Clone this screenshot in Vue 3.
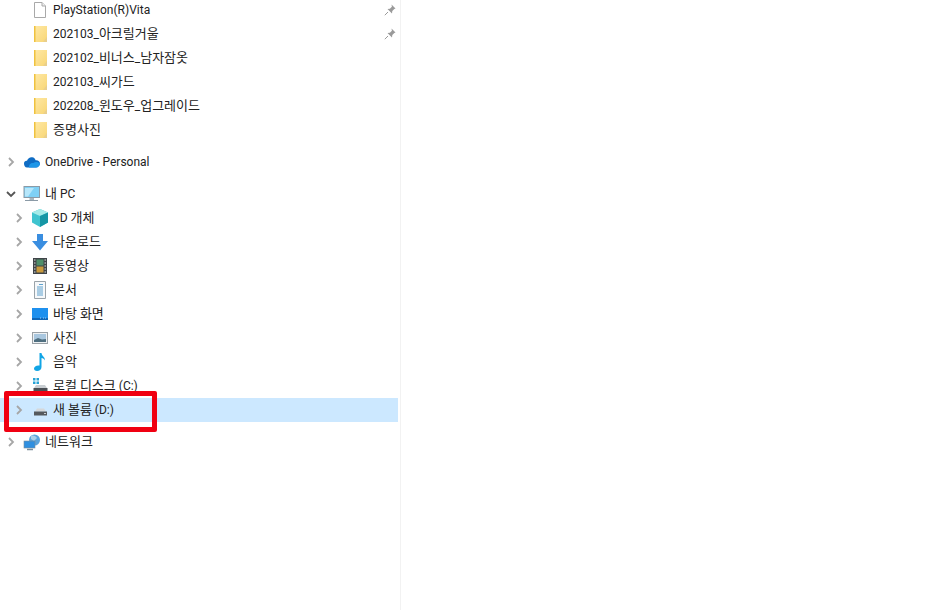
<script setup>
const quick = [
  { name: 'PlayStation(R)Vita', icon: 'file', pin: true },
  { name: '202103_아크릴거울', icon: 'folder', pin: true },
  { name: '202102_비너스_남자잠옷', icon: 'folder' },
  { name: '202103_씨가드', icon: 'folder' },
  { name: '202208_윈도우_업그레이드', icon: 'folder' },
  { name: '증명사진', icon: 'folder' },
]
const pc = [
  { name: '3D 개체', icon: 'cube' },
  { name: '다운로드', icon: 'download' },
  { name: '동영상', icon: 'film' },
  { name: '문서', icon: 'doc' },
  { name: '바탕 화면', icon: 'desktop' },
  { name: '사진', icon: 'photo' },
  { name: '음악', icon: 'music' },
  { name: '로컬 디스크 (C:)', icon: 'diskc' },
  { name: '새 볼륨 (D:)', icon: 'diskd', selected: true },
]

// hangul runs are set a bit larger, Malgun Gothic is wider than the CJK fallback
function runs(name) {
  return name.split(/([가-힣]+)/).filter(Boolean).map(text => ({ text, ko: /[가-힣]/.test(text) }))
}
</script>

<template>
  <div class="pane">
    <nav class="tree">
      <ul class="group">
        <li v-for="item in quick" :key="item.name" class="row sub">
          <span class="arrow"></span>
          <svg class="icon" viewBox="0 0 16 18" width="16" height="18">
            <defs>
              <linearGradient id="fold" x1="0" y1="0" x2="1" y2="1">
                <stop offset="0" stop-color="#ffe9a6" />
                <stop offset="1" stop-color="#f8d675" />
              </linearGradient>
            </defs>
            <template v-if="item.icon === 'file'">
              <path d="M2.500 1.500h7.500l3.500 3.500v11.500h-11z" fill="#fff" stroke="#a9a9a9" />
              <path d="M10 1.500v3.500h3.500" fill="#efefef" stroke="#a9a9a9" />
            </template>
            <template v-else>
              <rect x="2" y="1" width="13" height="16" fill="url(#fold)" />
              <rect x="2" y="1" width="1.500" height="16" fill="#efc23f" />
              <path d="M11 17l4-5v5z" fill="#e9cf8c" />
            </template>
          </svg>
          <span class="label"><span v-for="(r, i) in runs(item.name)" :key="i" :class="{ ko: r.ko }">{{ r.text }}</span></span>
          <svg v-if="item.pin" class="pin" viewBox="0 0 12 12" width="12" height="12">
            <path d="M7.500 .5l4 4-1.200.6-2 2-.3 2.400-4.500-4.500 2.400-.3 2-2z" fill="#9a9a9a" />
            <path d="M4 8l-3.200 3.200" stroke="#9a9a9a" fill="none" />
          </svg>
        </li>
      </ul>

      <ul class="group">
        <li class="row top">
          <svg class="arrow-svg" viewBox="0 0 8 10" width="8" height="10">
            <path d="M2 1l4 4-4 4" fill="none" stroke="#a6a6a6" stroke-width="1.800" />
          </svg>
          <svg class="icon" viewBox="0 0 18 12" width="18" height="12">
            <path d="M1 7.500C1 5.500 2.500 4.500 4 4.800C5 2 7 .8 9.200 1.200C11 1.500 12.200 2.600 12.600 4.200C15 3.800 17 5.400 17 7.600C17 10 15 11.500 13 11.500H4C2 11.500 1 9.500 1 7.500Z" fill="#0f6cc4" />
            <path d="M6 11.500C5.500 8.500 8 6.500 10.500 7C12 5.500 15.500 5.500 17 7.600C17 10 15 11.500 13 11.500Z" fill="#1d96e8" />
          </svg>
          <span class="label">OneDrive - Personal</span>
        </li>
      </ul>

      <ul class="group">
        <li class="row top">
          <svg class="arrow-svg" viewBox="0 0 10 8" width="10" height="8">
            <path d="M1 2l4 4 4-4" fill="none" stroke="#555" stroke-width="1.800" />
          </svg>
          <svg class="icon" viewBox="0 0 18 16" width="18" height="16">
            <rect x="1" y=".5" width="15.500" height="11" fill="#7fd0f5" stroke="#8b9aa6" />
            <path d="M2 2h9l-6 8.500H2z" fill="#b7e7fb" />
            <path d="M6.500 12h4.500v2H6.500z" fill="#a9b6bf" />
            <path d="M2 14.500h13" stroke="#8b9aa6" />
          </svg>
          <span class="label"><span class="ko">내</span> PC</span>
        </li>
        <li v-for="item in pc" :key="item.name" class="row sub" :class="{ selected: item.selected }">
          <svg class="arrow-svg" viewBox="0 0 8 10" width="8" height="10">
            <path d="M2 1l4 4-4 4" fill="none" stroke="#a6a6a6" stroke-width="1.800" />
          </svg>
          <svg class="icon" viewBox="0 0 16 18" width="16" height="18">
            <template v-if="item.icon === 'cube'">
              <path d="M8 0l8 3.500v10L8 18 0 13.500v-10z" fill="#3fc4cf" />
              <path d="M8 0l8 3.500L8 7 0 3.500z" fill="#a5ebe8" />
              <path d="M8 7l8-3.500v10L8 18z" fill="#1596a5" />
            </template>
            <path v-else-if="item.icon === 'download'" d="M5 1h6v7h5l-8 9.500-8-9.500h5z" fill="#3a8ee0" />
            <template v-else-if="item.icon === 'film'">
              <rect x="1" y="1" width="14" height="16" fill="#3f4448" />
              <path d="M2 3h1.500M2 6h1.500M2 9h1.500M2 12h1.500M2 15h1.500M12.500 3H14M12.500 6H14M12.500 9H14M12.500 12H14M12.500 15H14" stroke="#ddd" />
              <rect x="4.500" y="2.500" width="7" height="6" fill="#4f8f6a" />
              <rect x="4.500" y="9.500" width="7" height="6" fill="#c99a3d" />
            </template>
            <template v-else-if="item.icon === 'doc'">
              <path d="M2.500 .5h11v17h-11z" fill="#f6f8fa" stroke="#9aa3a9" />
              <path d="M7 3.500h4M5 6h6M5 8h6M5 10h6M5 12h6M5 14h6" stroke="#4c97c9" stroke-width=".9" />
            </template>
            <template v-else-if="item.icon === 'desktop'">
              <rect x="0" y="3" width="16" height="12" fill="#1e90ee" />
              <rect x="0" y="13" width="16" height="2" fill="#0f66b8" />
              <path d="M8 13h1M11 13h1M13 13h1" stroke="#9bd0f7" />
            </template>
            <template v-else-if="item.icon === 'photo'">
              <rect x=".5" y="3.500" width="15" height="11" fill="#eef1f3" stroke="#9aa1a6" />
              <rect x="2" y="5" width="12" height="8" fill="#a9c7df" />
              <path d="M2 11l4-2 4 1.500 4-.5v3H2z" fill="#4f6f80" />
            </template>
            <path v-else-if="item.icon === 'music'" d="M7.500 0h2c.2 3 3.500 3.500 3.500 7.500-.8-1.500-2-2.200-3.500-2.500v9c0 2.500-2 4-4.500 4C3 18 2 16.800 2 15.500 2 13.500 4.500 12 7.500 12.500z" fill="#11a5e6" />
            <template v-else-if="item.icon === 'diskc'">
              <path d="M1 1h2.500v2.500H1zM4.500 1H7v2.500H4.500zM1 4.500h2.500V7H1zM4.500 4.500H7V7H4.500z" fill="#27a3d6" />
              <path d="M2 11l2-3h9l2 3z" fill="#c9ced2" />
              <rect x="1.500" y="11" width="14" height="5" fill="#4a4f54" />
            </template>
            <template v-else>
              <path d="M3 10.500l2-3h7l2 3z" fill="#d5d8da" />
              <rect x="2" y="10.500" width="13" height="4" fill="#55595d" />
              <path d="M12 12.500h2" stroke="#c9ced2" />
            </template>
          </svg>
          <span class="label"><span v-for="(r, i) in runs(item.name)" :key="i" :class="{ ko: r.ko }">{{ r.text }}</span></span>
        </li>
      </ul>

      <ul class="group">
        <li class="row top">
          <svg class="arrow-svg" viewBox="0 0 8 10" width="8" height="10">
            <path d="M2 1l4 4-4 4" fill="none" stroke="#a6a6a6" stroke-width="1.800" />
          </svg>
          <svg class="icon" viewBox="0 0 18 17" width="18" height="17">
            <circle cx="11.500" cy="6" r="5.500" fill="#5aa3dc" />
            <path d="M8 2c2-1 5 0 6 2l-3 3-3-2z" fill="#a8cfe8" />
            <rect x="1" y="7" width="11" height="7" fill="#2f8fe0" stroke="#7b8c99" stroke-width=".6" />
            <path d="M4 15.500h6" stroke="#7b8c99" stroke-width="1.500" />
          </svg>
          <span class="label"><span class="ko">네트워크</span></span>
        </li>
      </ul>

      <div class="callout"></div>
    </nav>
  </div>
</template>

<style scoped>
.pane {
  width: 401px;
  height: 610px;
  box-sizing: border-box;
  border-right: 1px solid #f2f2f2;
  overflow: hidden;
  font-family: Roboto, "Noto Sans CJK KR", sans-serif;
  font-size: 12px;
  color: #222;
}

.tree {
  position: relative;
  width: 398px;
  margin-top: -2px;
}

.group {
  list-style: none;
  margin: 0 0 8px;
  padding: 0;
}

.row {
  display: flex;
  align-items: center;
  height: 24px;
  white-space: nowrap;
}

.row.top {
  padding-left: 7px;
}

.row.sub {
  padding-left: 15px;
}

.row.selected {
  background: #cce8ff;
}

.label {
  line-height: 16px;
  padding-bottom: 1px;
}

.ko {
  font-size: 13px;
  line-height: 1;
}

.arrow,
.arrow-svg {
  flex: none;
  width: 8px;
  margin-right: 8px;
}

.row.top .arrow-svg[width="10"] {
  width: 10px;
  margin-left: -1px;
  margin-right: 7px;
}

.icon {
  flex: none;
  margin-right: 5px;
}

.row.sub .icon {
  margin-left: 1px;
}

.row.top .icon {
  margin-left: 0;
  margin-right: 4px;
}

.pin {
  margin-left: auto;
  margin-right: 2px;
}

.callout {
  position: absolute;
  left: 4px;
  top: 393px;
  width: 153px;
  height: 41px;
  box-sizing: border-box;
  border: 5px solid #f00012;
  border-radius: 2px;
}
</style>
